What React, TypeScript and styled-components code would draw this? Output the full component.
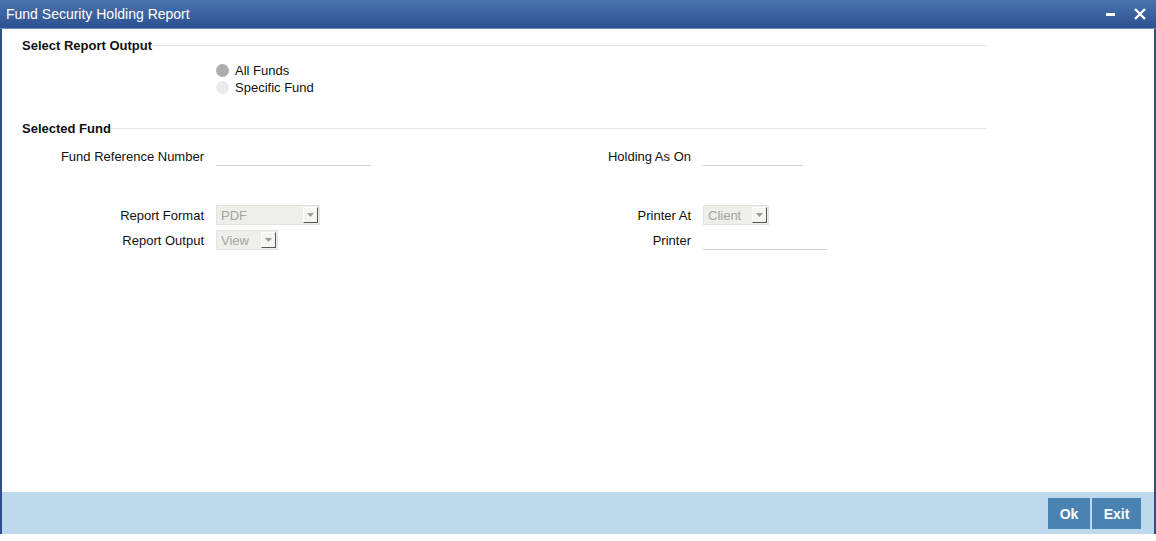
import React from "react";
import styled, { createGlobalStyle } from "styled-components";

const GlobalStyle = createGlobalStyle`
  html, body {
    margin: 0;
    padding: 0;
    background: #ffffff;
    font-family: "Liberation Sans", Arial, sans-serif;
  }
`;

const Window = styled.div`
  width: 1156px;
  height: 534px;
  box-sizing: border-box;
  display: flex;
  flex-direction: column;
  border-left: 2px solid #2d4e8a;
  border-right: 2px solid #2d4e8a;
  background: #ffffff;
`;

const TitleBar = styled.div`
  height: 28px;
  flex: none;
  display: flex;
  align-items: center;
  justify-content: space-between;
  padding: 0 10px 0 6px;
  margin: 0 -2px;
  background: linear-gradient(#4b74ae, #2d5090);
  border-bottom: 1px solid #6d8cbc;
  color: #ffffff;
  font-size: 14px;
`;

const TitleActions = styled.div`
  display: flex;
  align-items: center;
  gap: 18px;
`;

const Content = styled.div`
  flex: 1;
  padding-top: 7px;
`;

const SectionHeader = styled.div<{ $top?: number }>`
  display: flex;
  align-items: center;
  height: 18px;
  width: 965px;
  padding-left: 20px;
  margin-top: ${({ $top }) => $top || 0}px;
  font-size: 13px;
  font-weight: bold;
  color: #111111;
  &::after {
    content: "";
    flex: 1;
    border-top: 1px solid #e6e6e6;
  }
`;

const RadioGroup = styled.div`
  display: flex;
  flex-direction: column;
  padding-left: 214px;
  margin-top: 8px;
`;

const RadioRow = styled.label`
  display: flex;
  align-items: center;
  gap: 6px;
  height: 17px;
  font-size: 13px;
  color: #111111;
`;

const RadioDot = styled.span<{ $checked?: boolean }>`
  width: 13px;
  height: 13px;
  border-radius: 50%;
  background: ${({ $checked }) => ($checked ? "#acacac" : "#ebebeb")};
`;

const FormGrid = styled.div<{ $top: number }>`
  display: grid;
  grid-template-columns: 202px 280px 183px auto;
  column-gap: 12px;
  row-gap: 5px;
  align-items: center;
  margin-top: ${({ $top }) => $top}px;
`;

const Label = styled.div`
  text-align: right;
  font-size: 13px;
  color: #111111;
`;

const TextLine = styled.div<{ $w: number }>`
  width: ${({ $w }) => $w}px;
  height: 19px;
  border-bottom: 1px solid #d2d2d2;
`;

const Select = styled.div<{ $w: number }>`
  width: ${({ $w }) => $w}px;
  height: 20px;
  box-sizing: border-box;
  display: flex;
  align-items: center;
  justify-content: space-between;
  padding: 0 1px 0 4px;
  background: #eeeeea;
  border: 1px solid #e2e2de;
  color: #a3a3a3;
  font-size: 13px;
`;

const SelectArrow = styled.span`
  width: 15px;
  height: 16px;
  box-sizing: border-box;
  display: flex;
  align-items: center;
  justify-content: center;
  background: #f4f4f2;
  border-top: 1px solid #ffffff;
  border-left: 1px solid #ffffff;
  border-right: 1px solid #555555;
  border-bottom: 1px solid #555555;
`;

const Footer = styled.div`
  height: 42px;
  flex: none;
  display: flex;
  align-items: center;
  justify-content: flex-end;
  gap: 2px;
  padding-right: 13px;
  background: #bed8ec;
`;

const FooterButton = styled.button<{ $w: number }>`
  width: ${({ $w }) => $w}px;
  height: 31px;
  border: none;
  background: #4a83b1;
  color: #ffffff;
  font-family: "Liberation Sans", Arial, sans-serif;
  font-size: 14px;
  font-weight: bold;
  padding: 1px 0 0;
`;

const Arrow = () => (
  <svg width="7" height="4" viewBox="0 0 7 4">
    <path d="M0 0h7L3.5 4z" fill="#9a9a9a" />
  </svg>
);

const Dropdown = ({ value, width }: { value: string; width: number }) => (
  <Select $w={width}>
    <span>{value}</span>
    <SelectArrow>
      <Arrow />
    </SelectArrow>
  </Select>
);

const App = () => {
  return (
    <>
      <GlobalStyle />
      <Window>
        <TitleBar>
          <span>Fund Security Holding Report</span>
          <TitleActions>
            <svg width="10" height="12" viewBox="0 0 10 12">
              <rect x="0" y="5" width="9" height="3" fill="#ffffff" />
            </svg>
            <svg width="12" height="12" viewBox="0 0 12 12">
              <path d="M1 1L11 11M11 1L1 11" stroke="#ffffff" strokeWidth="2.4" />
            </svg>
          </TitleActions>
        </TitleBar>
        <Content>
          <SectionHeader>Select Report Output</SectionHeader>
          <RadioGroup>
            <RadioRow>
              <RadioDot $checked />
              All Funds
            </RadioRow>
            <RadioRow>
              <RadioDot />
              Specific Fund
            </RadioRow>
          </RadioGroup>
          <SectionHeader $top={23}>Selected Fund</SectionHeader>
          <FormGrid $top={9}>
            <Label>Fund Reference Number</Label>
            <TextLine $w={155} />
            <Label>Holding As On</Label>
            <TextLine $w={100} />
          </FormGrid>
          <FormGrid $top={39}>
            <Label>Report Format</Label>
            <Dropdown value="PDF" width={104} />
            <Label>Printer At</Label>
            <Dropdown value="Client" width={66} />
            <Label>Report Output</Label>
            <Dropdown value="View" width={62} />
            <Label>Printer</Label>
            <TextLine $w={124} />
          </FormGrid>
        </Content>
        <Footer>
          <FooterButton $w={42}>Ok</FooterButton>
          <FooterButton $w={49}>Exit</FooterButton>
        </Footer>
      </Window>
    </>
  );
};

export default App;
